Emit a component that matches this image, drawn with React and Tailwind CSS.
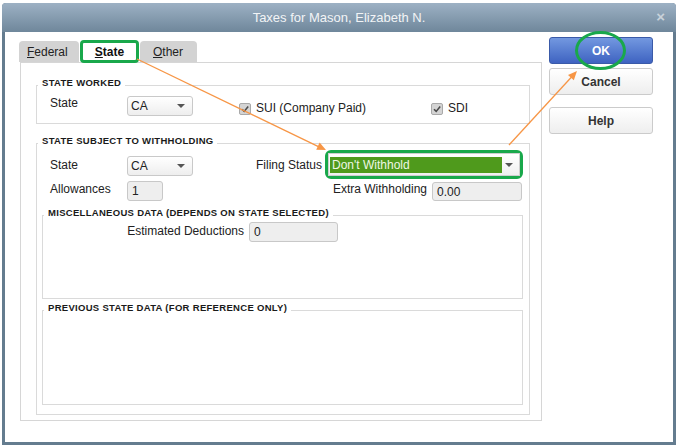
import React from "react";

const font = { fontFamily: '"Liberation Sans", Arial, sans-serif' };

function Arrow() {
  return (
    <svg width="8" height="4" viewBox="0 0 8 4">
      <path d="M0 0 H8 L4 4 Z" fill="#555" />
    </svg>
  );
}

function Select({ value, className }) {
  return (
    <div className={`flex items-center justify-between rounded-[3px] border border-[#c9c9c9] bg-gradient-to-b from-white to-[#eeeeee] pl-[3px] pr-[7px] ${className}`}>
      <span className="text-[12px] text-[#222]">{value}</span>
      <Arrow />
    </div>
  );
}

function Input({ value, className }) {
  return (
    <div className={`flex items-center rounded-[3px] border border-[#c8c8c8] bg-[#eeeeee] pl-[4px] text-[12px] text-[#222] ${className}`}>
      {value}
    </div>
  );
}

function Checkbox() {
  return (
    <div className="flex h-[12px] w-[12px] items-center justify-center rounded-[2px] border border-[#a9a9a9] bg-[#d4d4d4]">
      <svg width="10" height="10" viewBox="0 0 10 10">
        <path d="M2 5.2 L4.2 7.4 L8.2 2.6" fill="none" stroke="#4a4a4a" strokeWidth="1.6" />
      </svg>
    </div>
  );
}

function Group({ label, className, children }) {
  return (
    <div className={`border border-[#dadada] ${className}`}>
      <div className="-mt-[9px] ml-[1px] w-fit bg-white px-[4px] text-[9.5px] font-bold leading-[12px] tracking-[0.3px] text-[#1a1a1a]">
        {label}
      </div>
      {children}
    </div>
  );
}

function Button({ children, primary, className }) {
  return (
    <div
      className={`flex h-[27px] w-[104px] items-center justify-center rounded-[3px] border text-[12px] font-bold ${
        primary
          ? "border-[#3a5aa8] bg-gradient-to-b from-[#7398e0] to-[#3f63c1] text-white"
          : "border-[#cbcbcb] bg-gradient-to-b from-white to-[#eeeeee] text-[#333]"
      } ${className}`}
    >
      {children}
    </div>
  );
}

export default function App() {
  return (
    <div className="relative h-[447px] w-[678px] overflow-hidden bg-white pl-[2px] pt-[3px]" style={font}>
      <div className="flex h-[442px] w-[674px] flex-col rounded-t-[4px] bg-[#647c8f] px-[3px] pb-[3px]">
        {/* Title bar */}
        <div className="relative -mx-[3px] flex h-[29px] items-center justify-center rounded-t-[4px] bg-gradient-to-b from-[#9db1c4] to-[#6f879b]">
          <span className="text-[13px] text-[#f2f4f6]">Taxes for Mason, Elizabeth N.</span>
          <span className="absolute right-[11px] top-[6px] text-[15px] font-bold leading-[15px] text-[#c9d2da]">×</span>
        </div>

        {/* Body */}
        <div className="flex flex-1 bg-white">
          <div className="pl-[14px] pt-[8px]">
            {/* Tabs */}
            <div className="flex h-[22px] items-end gap-[1px]">
              <div className="flex h-[21px] w-[60px] items-center rounded-t-[4px] bg-[#d3d3d3] pl-[8px] text-[12px] text-[#222]">
                <span><span className="underline">F</span>ederal</span>
              </div>
              <div className="relative z-10 -mb-[1px] flex h-[23px] w-[59px] items-center justify-center rounded-[4px] border-[3px] border-[#19a84b] bg-white text-[12px] font-bold text-[#111]">
                <span><span className="underline">S</span>tate</span>
              </div>
              <div className="flex h-[21px] w-[57px] items-center rounded-t-[4px] bg-[#d3d3d3] pl-[13px] text-[12px] text-[#222]">
                <span><span className="underline">O</span>ther</span>
              </div>
            </div>

            {/* Panel */}
            <div className="ml-[1px] h-[359px] w-[522px] border border-[#d6d6d6] pl-[15px] pt-[22px]">
              <Group label="STATE WORKED" className="h-[39px] w-[494px]">
                <div className="mt-[7px] flex items-start pl-[13px] text-[12px] leading-[14px] text-[#222]">
                  <span className="w-[77px]">State</span>
                  <Select value="CA" className="h-[20px] w-[66px]" />
                  <div className="ml-[46px] mt-[7px] flex w-[192px] items-center gap-[5px]">
                    <Checkbox />
                    <span className="-mt-[2px]">SUI (Company Paid)</span>
                  </div>
                  <div className="mt-[7px] flex items-center gap-[5px]">
                    <Checkbox />
                    <span className="-mt-[2px]">SDI</span>
                  </div>
                </div>
              </Group>

              <Group label="STATE SUBJECT TO WITHHOLDING" className="mt-[19px] h-[272px] w-[494px]">
                <div className="mt-[3px] flex h-[29px] items-start pl-[13px] text-[12px] leading-[14px] text-[#222]">
                  <span className="mt-[8px] w-[77px]">State</span>
                  <Select value="CA" className="mt-[6px] h-[20px] w-[66px]" />
                  <span className="mt-[8px] w-[129px] text-right">Filing Status</span>
                  <div className="ml-[3px] h-[29px] w-[198px] rounded-[6px] border-[3px] border-[#19a84b] bg-white">
                    <div className="flex h-full items-center justify-between border border-[#cfcfcf] bg-gradient-to-b from-white to-[#f0f0f0] pl-[1px] pr-[6px]">
                      <div className="flex h-[16px] w-[172px] items-center bg-[#4f9a1c] pl-[2px] text-[12px] text-[#eef7e4]">
                        Don't Withhold
                      </div>
                      <Arrow />
                    </div>
                  </div>
                </div>
                <div className="mt-[2px] flex h-[20px] items-start pl-[13px] text-[12px] leading-[14px] text-[#222]">
                  <span className="mt-[1px] w-[77px]">Allowances</span>
                  <Input value="1" className="h-[20px] w-[36px]" />
                  <span className="mt-[1px] w-[264px] text-right">Extra Withholding</span>
                  <Input value="0.00" className="ml-[5px] mt-[1px] h-[19px] w-[90px]" />
                </div>

                <Group label="MISCELLANEOUS DATA (DEPENDS ON STATE SELECTED)" className="ml-[5px] mt-[14px] h-[84px] w-[481px]">
                  <div className="mt-[3px] flex items-start text-[12px] leading-[14px] text-[#222]">
                    <span className="mt-[2px] w-[201px] text-right">Estimated Deductions</span>
                    <Input value="0" className="ml-[5px] h-[20px] w-[89px]" />
                  </div>
                </Group>

                <Group label="PREVIOUS STATE DATA (FOR REFERENCE ONLY)" className="ml-[5px] mt-[11px] h-[95px] w-[481px]" />
              </Group>
            </div>
          </div>

          {/* Buttons */}
          <div className="ml-[7px] flex flex-col pt-[5px]">
            <Button primary>OK</Button>
            <Button className="mt-[4px]">Cancel</Button>
            <Button className="mt-[12px]">Help</Button>
          </div>
        </div>
      </div>

      {/* Annotations */}
      <svg className="pointer-events-none absolute inset-0 z-20" width="678" height="447">
        <line x1="137" y1="59" x2="320" y2="147.3" stroke="#f79646" strokeWidth="1.3" />
        <polygon points="326,150 316.2,149.7 319.6,142.5" fill="#f79646" />
        <line x1="509" y1="145" x2="572" y2="76.5" stroke="#f79646" strokeWidth="1.3" />
        <polygon points="577,71 573.8,80.3 568,74.9" fill="#f79646" />
        <ellipse cx="600.5" cy="50.5" rx="24" ry="18" fill="none" stroke="#19a84b" strokeWidth="3" />
      </svg>
    </div>
  );
}
